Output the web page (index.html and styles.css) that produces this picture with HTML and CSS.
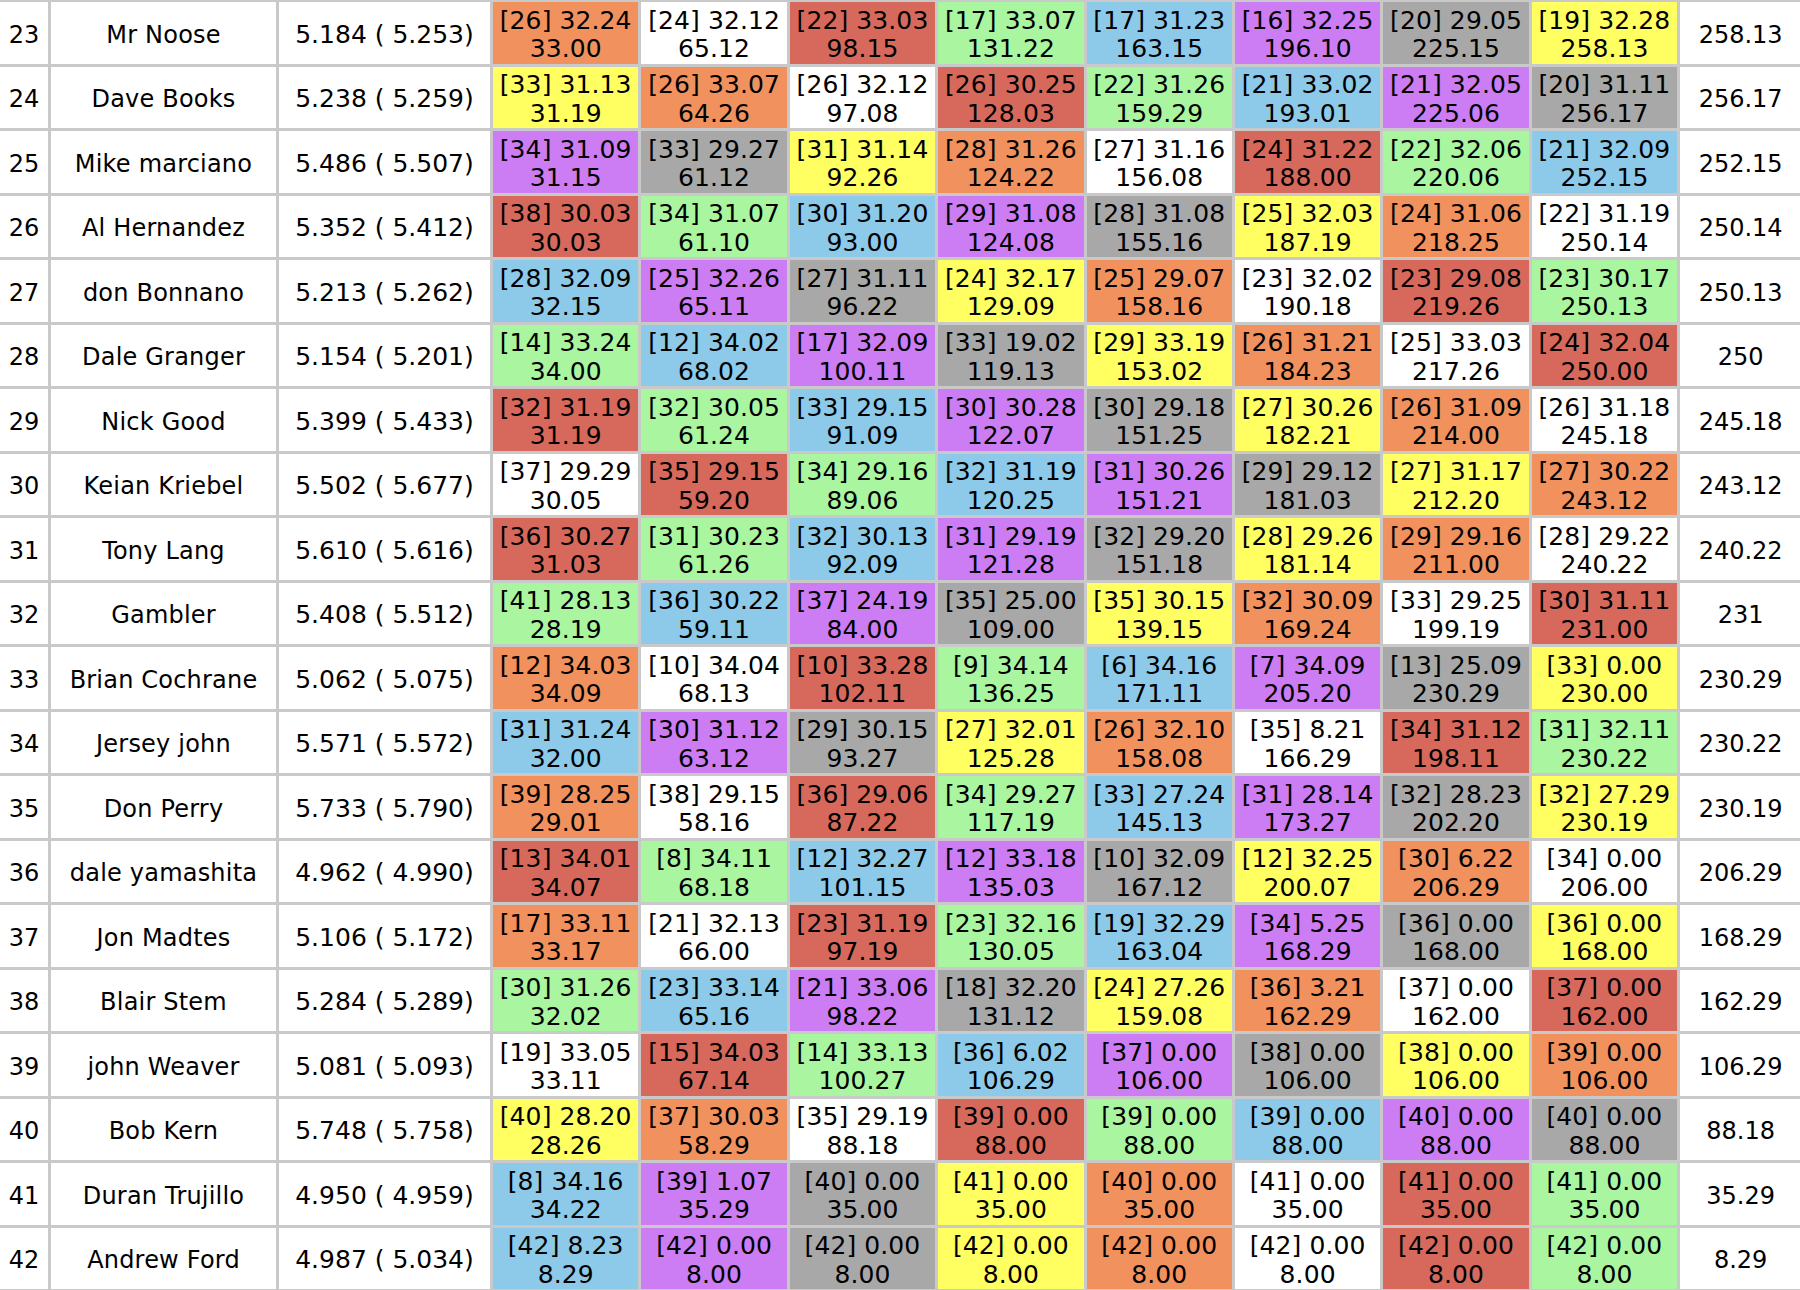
FILE: index.html
```html
<!DOCTYPE html>
<html lang="en">
<head>
<meta charset="utf-8">
<title>Standings</title>
<link rel="stylesheet" href="styles.css">
</head>
<body>
<table class="standings">
<colgroup>
<col class="col-rank"><col class="col-name"><col class="col-rating">
<col class="col-week"><col class="col-week"><col class="col-week"><col class="col-week">
<col class="col-week"><col class="col-week"><col class="col-week"><col class="col-week">
<col class="col-total">
</colgroup>
<tbody>
<tr><td>23</td><td class="n">Mr Noose</td><td class="rt">5.184 ( 5.253)</td>
<td class="c o">[26] 32.24<br>33.00</td><td class="c w">[24] 32.12<br>65.12</td><td class="c r">[22] 33.03<br>98.15</td><td class="c g">[17] 33.07<br>131.22</td><td class="c b">[17] 31.23<br>163.15</td><td class="c p">[16] 32.25<br>196.10</td><td class="c k">[20] 29.05<br>225.15</td><td class="c y">[19] 32.28<br>258.13</td><td>258.13</td></tr>
<tr><td>24</td><td class="n">Dave Books</td><td class="rt">5.238 ( 5.259)</td>
<td class="c y">[33] 31.13<br>31.19</td><td class="c o">[26] 33.07<br>64.26</td><td class="c w">[26] 32.12<br>97.08</td><td class="c r">[26] 30.25<br>128.03</td><td class="c g">[22] 31.26<br>159.29</td><td class="c b">[21] 33.02<br>193.01</td><td class="c p">[21] 32.05<br>225.06</td><td class="c k">[20] 31.11<br>256.17</td><td>256.17</td></tr>
<tr><td>25</td><td class="n">Mike marciano</td><td class="rt">5.486 ( 5.507)</td>
<td class="c p">[34] 31.09<br>31.15</td><td class="c k">[33] 29.27<br>61.12</td><td class="c y">[31] 31.14<br>92.26</td><td class="c o">[28] 31.26<br>124.22</td><td class="c w">[27] 31.16<br>156.08</td><td class="c r">[24] 31.22<br>188.00</td><td class="c g">[22] 32.06<br>220.06</td><td class="c b">[21] 32.09<br>252.15</td><td>252.15</td></tr>
<tr><td>26</td><td class="n">Al Hernandez</td><td class="rt">5.352 ( 5.412)</td>
<td class="c r">[38] 30.03<br>30.03</td><td class="c g">[34] 31.07<br>61.10</td><td class="c b">[30] 31.20<br>93.00</td><td class="c p">[29] 31.08<br>124.08</td><td class="c k">[28] 31.08<br>155.16</td><td class="c y">[25] 32.03<br>187.19</td><td class="c o">[24] 31.06<br>218.25</td><td class="c w">[22] 31.19<br>250.14</td><td>250.14</td></tr>
<tr><td>27</td><td class="n">don Bonnano</td><td class="rt">5.213 ( 5.262)</td>
<td class="c b">[28] 32.09<br>32.15</td><td class="c p">[25] 32.26<br>65.11</td><td class="c k">[27] 31.11<br>96.22</td><td class="c y">[24] 32.17<br>129.09</td><td class="c o">[25] 29.07<br>158.16</td><td class="c w">[23] 32.02<br>190.18</td><td class="c r">[23] 29.08<br>219.26</td><td class="c g">[23] 30.17<br>250.13</td><td>250.13</td></tr>
<tr><td>28</td><td class="n">Dale Granger</td><td class="rt">5.154 ( 5.201)</td>
<td class="c g">[14] 33.24<br>34.00</td><td class="c b">[12] 34.02<br>68.02</td><td class="c p">[17] 32.09<br>100.11</td><td class="c k">[33] 19.02<br>119.13</td><td class="c y">[29] 33.19<br>153.02</td><td class="c o">[26] 31.21<br>184.23</td><td class="c w">[25] 33.03<br>217.26</td><td class="c r">[24] 32.04<br>250.00</td><td>250</td></tr>
<tr><td>29</td><td class="n">Nick Good</td><td class="rt">5.399 ( 5.433)</td>
<td class="c r">[32] 31.19<br>31.19</td><td class="c g">[32] 30.05<br>61.24</td><td class="c b">[33] 29.15<br>91.09</td><td class="c p">[30] 30.28<br>122.07</td><td class="c k">[30] 29.18<br>151.25</td><td class="c y">[27] 30.26<br>182.21</td><td class="c o">[26] 31.09<br>214.00</td><td class="c w">[26] 31.18<br>245.18</td><td>245.18</td></tr>
<tr><td>30</td><td class="n">Keian Kriebel</td><td class="rt">5.502 ( 5.677)</td>
<td class="c w">[37] 29.29<br>30.05</td><td class="c r">[35] 29.15<br>59.20</td><td class="c g">[34] 29.16<br>89.06</td><td class="c b">[32] 31.19<br>120.25</td><td class="c p">[31] 30.26<br>151.21</td><td class="c k">[29] 29.12<br>181.03</td><td class="c y">[27] 31.17<br>212.20</td><td class="c o">[27] 30.22<br>243.12</td><td>243.12</td></tr>
<tr><td>31</td><td class="n">Tony Lang</td><td class="rt">5.610 ( 5.616)</td>
<td class="c r">[36] 30.27<br>31.03</td><td class="c g">[31] 30.23<br>61.26</td><td class="c b">[32] 30.13<br>92.09</td><td class="c p">[31] 29.19<br>121.28</td><td class="c k">[32] 29.20<br>151.18</td><td class="c y">[28] 29.26<br>181.14</td><td class="c o">[29] 29.16<br>211.00</td><td class="c w">[28] 29.22<br>240.22</td><td>240.22</td></tr>
<tr><td>32</td><td class="n">Gambler</td><td class="rt">5.408 ( 5.512)</td>
<td class="c g">[41] 28.13<br>28.19</td><td class="c b">[36] 30.22<br>59.11</td><td class="c p">[37] 24.19<br>84.00</td><td class="c k">[35] 25.00<br>109.00</td><td class="c y">[35] 30.15<br>139.15</td><td class="c o">[32] 30.09<br>169.24</td><td class="c w">[33] 29.25<br>199.19</td><td class="c r">[30] 31.11<br>231.00</td><td>231</td></tr>
<tr><td>33</td><td class="n">Brian Cochrane</td><td class="rt">5.062 ( 5.075)</td>
<td class="c o">[12] 34.03<br>34.09</td><td class="c w">[10] 34.04<br>68.13</td><td class="c r">[10] 33.28<br>102.11</td><td class="c g">[9] 34.14<br>136.25</td><td class="c b">[6] 34.16<br>171.11</td><td class="c p">[7] 34.09<br>205.20</td><td class="c k">[13] 25.09<br>230.29</td><td class="c y">[33] 0.00<br>230.00</td><td>230.29</td></tr>
<tr><td>34</td><td class="n">Jersey john</td><td class="rt">5.571 ( 5.572)</td>
<td class="c b">[31] 31.24<br>32.00</td><td class="c p">[30] 31.12<br>63.12</td><td class="c k">[29] 30.15<br>93.27</td><td class="c y">[27] 32.01<br>125.28</td><td class="c o">[26] 32.10<br>158.08</td><td class="c w">[35] 8.21<br>166.29</td><td class="c r">[34] 31.12<br>198.11</td><td class="c g">[31] 32.11<br>230.22</td><td>230.22</td></tr>
<tr><td>35</td><td class="n">Don Perry</td><td class="rt">5.733 ( 5.790)</td>
<td class="c o">[39] 28.25<br>29.01</td><td class="c w">[38] 29.15<br>58.16</td><td class="c r">[36] 29.06<br>87.22</td><td class="c g">[34] 29.27<br>117.19</td><td class="c b">[33] 27.24<br>145.13</td><td class="c p">[31] 28.14<br>173.27</td><td class="c k">[32] 28.23<br>202.20</td><td class="c y">[32] 27.29<br>230.19</td><td>230.19</td></tr>
<tr><td>36</td><td class="n">dale yamashita</td><td class="rt">4.962 ( 4.990)</td>
<td class="c r">[13] 34.01<br>34.07</td><td class="c g">[8] 34.11<br>68.18</td><td class="c b">[12] 32.27<br>101.15</td><td class="c p">[12] 33.18<br>135.03</td><td class="c k">[10] 32.09<br>167.12</td><td class="c y">[12] 32.25<br>200.07</td><td class="c o">[30] 6.22<br>206.29</td><td class="c w">[34] 0.00<br>206.00</td><td>206.29</td></tr>
<tr><td>37</td><td class="n">Jon Madtes</td><td class="rt">5.106 ( 5.172)</td>
<td class="c o">[17] 33.11<br>33.17</td><td class="c w">[21] 32.13<br>66.00</td><td class="c r">[23] 31.19<br>97.19</td><td class="c g">[23] 32.16<br>130.05</td><td class="c b">[19] 32.29<br>163.04</td><td class="c p">[34] 5.25<br>168.29</td><td class="c k">[36] 0.00<br>168.00</td><td class="c y">[36] 0.00<br>168.00</td><td>168.29</td></tr>
<tr><td>38</td><td class="n">Blair Stem</td><td class="rt">5.284 ( 5.289)</td>
<td class="c g">[30] 31.26<br>32.02</td><td class="c b">[23] 33.14<br>65.16</td><td class="c p">[21] 33.06<br>98.22</td><td class="c k">[18] 32.20<br>131.12</td><td class="c y">[24] 27.26<br>159.08</td><td class="c o">[36] 3.21<br>162.29</td><td class="c w">[37] 0.00<br>162.00</td><td class="c r">[37] 0.00<br>162.00</td><td>162.29</td></tr>
<tr><td>39</td><td class="n">john Weaver</td><td class="rt">5.081 ( 5.093)</td>
<td class="c w">[19] 33.05<br>33.11</td><td class="c r">[15] 34.03<br>67.14</td><td class="c g">[14] 33.13<br>100.27</td><td class="c b">[36] 6.02<br>106.29</td><td class="c p">[37] 0.00<br>106.00</td><td class="c k">[38] 0.00<br>106.00</td><td class="c y">[38] 0.00<br>106.00</td><td class="c o">[39] 0.00<br>106.00</td><td>106.29</td></tr>
<tr><td>40</td><td class="n">Bob Kern</td><td class="rt">5.748 ( 5.758)</td>
<td class="c y">[40] 28.20<br>28.26</td><td class="c o">[37] 30.03<br>58.29</td><td class="c w">[35] 29.19<br>88.18</td><td class="c r">[39] 0.00<br>88.00</td><td class="c g">[39] 0.00<br>88.00</td><td class="c b">[39] 0.00<br>88.00</td><td class="c p">[40] 0.00<br>88.00</td><td class="c k">[40] 0.00<br>88.00</td><td>88.18</td></tr>
<tr><td>41</td><td class="n">Duran Trujillo</td><td class="rt">4.950 ( 4.959)</td>
<td class="c b">[8] 34.16<br>34.22</td><td class="c p">[39] 1.07<br>35.29</td><td class="c k">[40] 0.00<br>35.00</td><td class="c y">[41] 0.00<br>35.00</td><td class="c o">[40] 0.00<br>35.00</td><td class="c w">[41] 0.00<br>35.00</td><td class="c r">[41] 0.00<br>35.00</td><td class="c g">[41] 0.00<br>35.00</td><td>35.29</td></tr>
<tr><td>42</td><td class="n">Andrew Ford</td><td class="rt">4.987 ( 5.034)</td>
<td class="c b">[42] 8.23<br>8.29</td><td class="c p">[42] 0.00<br>8.00</td><td class="c k">[42] 0.00<br>8.00</td><td class="c y">[42] 0.00<br>8.00</td><td class="c o">[42] 0.00<br>8.00</td><td class="c w">[42] 0.00<br>8.00</td><td class="c r">[42] 0.00<br>8.00</td><td class="c g">[42] 0.00<br>8.00</td><td>8.29</td></tr>
</tbody>
</table>
</body>
</html>
```

FILE: styles.css
```css
html, body {
  margin: 0;
  padding: 0;
  background: #ffffff;
  overflow: hidden;
}

.standings {
  table-layout: fixed;
  width: 1807.2px;
  margin: -1px 0 0 -3px;
  border-collapse: separate;
  border-spacing: 3px;
  background: #c9c9c9;
  font-family: "DejaVu Sans", Verdana, sans-serif;
  font-size: 24px;
  color: #000000;
}

.col-rank { width: 48px; }
.col-name { width: 225px; }
.col-rating { width: 211px; }
.col-week { width: 145.4px; }
.col-total { width: 121px; }

.standings td {
  height: 61.5px;
  padding: 4.5px 0 0;
  background: #ffffff;
  text-align: center;
  vertical-align: middle;
  line-height: 28.5px;
  white-space: nowrap;
  overflow: hidden;
  box-sizing: border-box;
}

.standings td.n { letter-spacing: 0.2px; }
.standings td.rt { font-size: 25px; }
.standings td.c { font-size: 25px; letter-spacing: 0.1px; }

.standings td.o { background: #f0915e; }
.standings td.w { background: #ffffff; }
.standings td.r { background: #d6695b; }
.standings td.g { background: #aaf5a0; }
.standings td.b { background: #8dc9e8; }
.standings td.p { background: #cc7df4; }
.standings td.k { background: #a8a8a8; }
.standings td.y { background: #ffff62; }
```
